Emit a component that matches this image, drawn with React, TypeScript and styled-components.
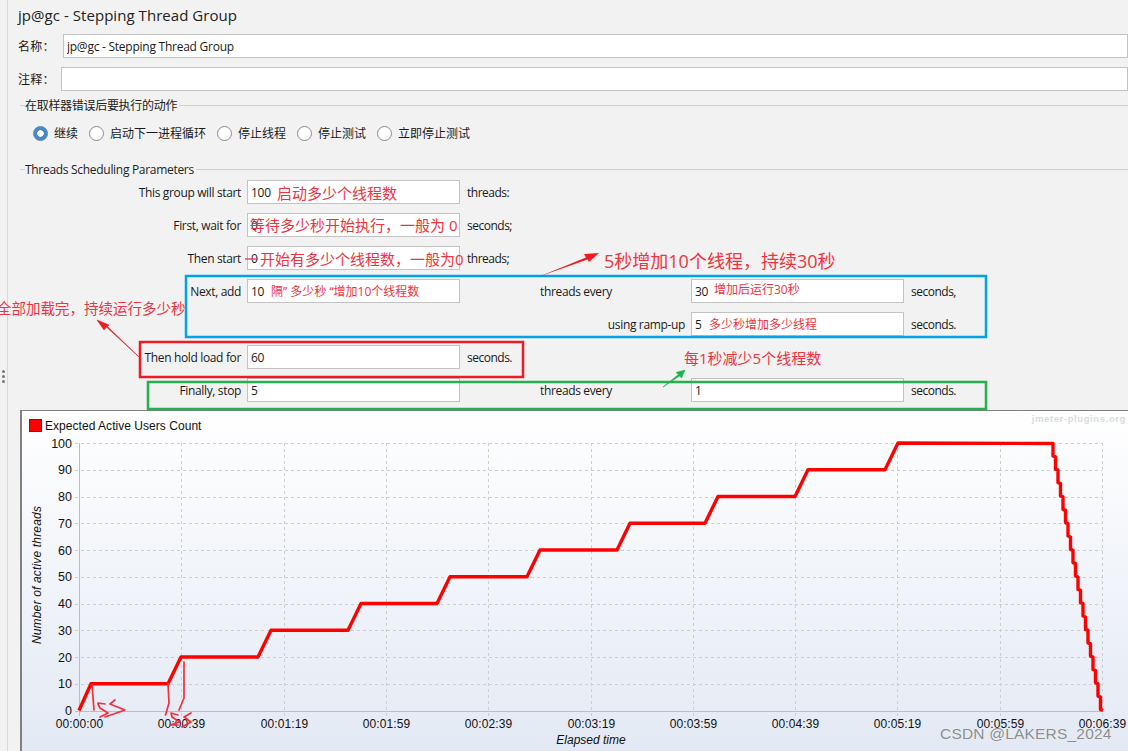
import React from 'react';
import styled, { createGlobalStyle } from 'styled-components';

const UI = `"Open Sans", "Noto Sans CJK SC", sans-serif`;
const CJK = `"Noto Sans CJK SC", "Noto Sans", sans-serif`;
const CHART = `"Liberation Sans", Arial, sans-serif`;

const Global = createGlobalStyle`
  html, body { margin: 0; padding: 0; width: 1128px; height: 751px; overflow: hidden; background: #f2f2f2; }
  #root { width: 1128px; height: 751px; }
  * { box-sizing: border-box; }
`;

const Page = styled.div`
  position: relative; width: 1128px; height: 751px; display: flex; overflow: hidden;
  background: #f2f2f2; color: #1a1a1a; font: 12px/16px ${UI};
`;
const Gutter = styled.div`
  width: 8px; flex: none; border-right: 1px solid #d9d9d9; display: flex; flex-direction: column;
  align-items: flex-start; padding: 370px 0 0 2px; gap: 2px;
`;
const Grip = styled.i`width: 3px; height: 3px; border-radius: 50%; background: #777; display: block;`;
const Main = styled.main`flex: 1; min-width: 0; padding-left: 10px; display: flex; flex-direction: column;`;
const Title = styled.h1`
  margin: 0; height: 34px; padding-top: 4px; font: 400 15px/22px ${UI}; letter-spacing: .05px; color: #222;
`;
const NameRow = styled.div<{ $gap: number }>`
  display: flex; align-items: center; height: 24px; margin-bottom: 9px; gap: ${p => p.$gap}px;
`;
const NameLabel = styled.label`font: 12px/24px ${CJK}; white-space: nowrap; width: 39px; flex: none; letter-spacing: .3px;`;
const Input = styled.input`
  display: block; width: 100%; height: 24px; border: 1.5px solid #c3c3c3; background: #fff; padding: 0 3px;
  font: 12px/20px ${UI}; letter-spacing: -.25px; color: #1a1a1a; outline: none; border-radius: 0;
`;
const Section = styled.section<{ $top: number }>`margin: ${p => p.$top}px 0 0 2px;`;
const Legend = styled.div`
  display: flex; align-items: center; height: 16px; font: 12px/16px ${UI}; letter-spacing: -.3px; color: #222;
  &::before { content: ''; width: 5px; height: 1px; background: #cfcfcf; }
  &::after { content: ''; flex: 1; height: 1px; background: #cfcfcf; margin-left: 2px; }
  & > span { padding-top: 1px; }
`;
const RadioRow = styled.div`display: flex; align-items: center; gap: 11px; height: 24px; margin: 8px 0 0 13px;`;
const RadioItem = styled.label`display: flex; align-items: center; gap: 6px; font: 12px/16px ${CJK};`;
const Radio = styled.span<{ $on?: boolean }>`
  width: 15px; height: 15px; border-radius: 50%; flex: none;
  border: 1px solid ${p => (p.$on ? '#4a86c8' : '#8a8a8a')};
  background: ${p => (p.$on ? 'radial-gradient(circle, #fff 0 3px, #4a86c8 3.5px)' : '#fff')};
`;
const Form = styled.div`
  display: grid; margin: 3px 0 0 -2px; row-gap: 9px; column-gap: 6px;
  grid-template-columns: 223px 213px 68px 145px 213px 1fr; grid-auto-rows: 24px; align-items: center;
  font: 12px/16px ${UI}; letter-spacing: -.35px;
`;
const Lab = styled.span<{ $col?: number; $left?: boolean }>`
  grid-column: ${p => p.$col ?? 1}; text-align: ${p => (p.$left ? 'left' : 'right')}; white-space: nowrap; padding-top: 2px;
`;
const Unit = styled.span<{ $col?: number }>`
  grid-column: ${p => p.$col ?? 3}; padding: 2px 0 0 1px; white-space: nowrap; letter-spacing: -.5px;
`;
const FieldCell = styled.div<{ $col?: number }>`
  grid-column: ${p => p.$col ?? 2};
  & > input { padding-top: 1px; }
`;

const ChartPanel = styled.div`
  margin: 8px 0 0 2px; flex: 1; border-left: 2px solid #808080; border-top: 1px solid #808080;
  background: linear-gradient(#fff 0%, #e3e9f4 100%); overflow: hidden;
`;
const ChartSvg = styled.svg`display: block; width: 100%; height: 100%; font-family: ${CHART};`;
const Overlay = styled.svg`position: absolute; left: 0; top: 0; width: 1128px; height: 751px; pointer-events: none;`;
const Note = styled.span<{ $x: number; $y: number; $s: number }>`
  position: absolute; left: ${p => p.$x}px; top: ${p => p.$y}px; font: ${p => p.$s}px/20px ${UI};
  color: #f03340; white-space: pre; pointer-events: none;
`;
const Watermark = styled.span`
  position: absolute; left: 940px; top: 724px; font: 15.5px/20px ${CHART}; color: rgba(70,70,70,.62);
  letter-spacing: .2px; white-space: nowrap; text-shadow: 0 0 1px rgba(255,255,255,.7);
`;

const X0 = 79, XS = 102.3, Y0 = 710.5, YS = 26.75;
const xLabels = ['00:00:00', '00:00:39', '00:01:19', '00:01:59', '00:02:39', '00:03:19', '00:03:59', '00:04:39', '00:05:19', '00:05:59', '00:06:39'];
const yLabels = Array.from({ length: 11 }, (_, i) => i * 10);

const curve = (() => {
  const pts: string[] = [`79,${Y0}`, `91,${Y0 - YS}`];
  const tops = [91, 181, 271, 361, 450, 540, 630, 718, 808, 898];
  for (let i = 1; i < 10; i++) {
    pts.push(`${tops[i] - 13},${Y0 - YS * i}`, `${tops[i]},${Y0 - YS * (i + 1)}`);
  }
  pts.push(`1053,443.5`);
  for (let i = 0; i < 20; i++) {
    const x = 1053 + i * 2.5;
    const y1 = 443.5 + (i + 1) * 13.35;
    pts.push(`${x.toFixed(1)},${(y1 - 1).toFixed(1)}`, `${(x + 2.5).toFixed(1)},${y1.toFixed(1)}`);
  }
  return pts.join(' ');
})();

const Chart = () => (
  <ChartSvg viewBox="22 411 1106 340" preserveAspectRatio="none">
    <text x="1126" y="422" textAnchor="end" fontSize="9.5" fontWeight="700" fill="#d8dce2" letterSpacing=".6">jmeter-plugins.org</text>
    <rect x="29.5" y="419.5" width="12" height="12" fill="#ff0000" stroke="#b00000" />
    <text x="45" y="430" fontSize="12" fill="#111" letterSpacing=".04">Expected Active Users Count</text>
    {yLabels.map(v => {
      const y = Y0 - (v / 10) * YS;
      return (
        <g key={v}>
          <line x1="75" x2="1102" y1={Math.round(y) + 0.5} y2={Math.round(y) + 0.5} stroke={v === 0 ? '#b9bdc8' : '#cbced4'} strokeDasharray={v === 0 ? undefined : '3 3'} />
          <text x="72" y={y + 4.5} textAnchor="end" fontSize="12.5" fill="#111">{v}</text>
        </g>
      );
    })}
    {xLabels.map((t, i) => {
      const x = Math.round(X0 + i * XS) + 0.5;
      return (
        <g key={t}>
          <line x1={x} x2={x} y1="443" y2="716" stroke={i === 0 ? '#b9bdc8' : '#cbced4'} strokeDasharray={i === 0 ? undefined : '3 3'} />
          <text x={x} y="728" textAnchor="middle" fontSize="12" fill="#111" letterSpacing=".1">{t}</text>
        </g>
      );
    })}
    <text transform="translate(41 575) rotate(-90)" textAnchor="middle" fontSize="12" fontStyle="italic" fill="#111" letterSpacing=".17">Number of active threads</text>
    <text x="591" y="744" textAnchor="middle" fontSize="12" fontStyle="italic" fill="#111">Elapsed time</text>
    <polyline points={curve} fill="none" stroke="#ff0000" strokeWidth="3.4" strokeLinejoin="round" />
  </ChartSvg>
);

const Marks = () => (
  <Overlay viewBox="0 0 1128 751">
    <rect x="186" y="276" width="800" height="61" fill="none" stroke="#00a2e8" strokeWidth="2.5" />
    <rect x="140" y="342" width="383" height="35" fill="none" stroke="#ed1c24" strokeWidth="2.5" />
    <rect x="148" y="382" width="838" height="27" fill="none" stroke="#22b14c" strokeWidth="2.5" />
    <path d="M538 277 L586 257.5 L584 254 L599 253 L589 262 L587.5 259.5 Z" fill="#ed1c24" />
    <path d="M139 357 L106.5 327 L104 330 L97 320 L109 325 L107.5 326.5 Z" fill="#ed1c24" stroke="#ed1c24" strokeWidth=".6" />
    <path d="M663 387 L678.5 374.5 L676 372.5 L685 370 L681.5 378 L679.5 376 Z" fill="#22b14c" stroke="#22b14c" strokeWidth=".6" />
    <line x1="245" y1="259" x2="258" y2="259" stroke="#f03340" strokeWidth="1.3" />
    <g fill="none" stroke="#f0303f" strokeWidth="1.7" strokeLinecap="round" strokeLinejoin="round">
      <path d="M92 685 L94 710" />
      <path d="M98 703 L105 704 M98 704 L100 708 L108 713 L100 717" />
      <path d="M115 700 L110 704 L125 710 L105 717" />
      <path d="M168 683 L169 703 L165.5 715" />
      <path d="M184 662 L184 698 L179 710" />
      <path d="M171 713 L178 715 M171 713 L172 717 L180 722 L170 725 L178 725" />
      <path d="M191 713 L184 717 L191 722 L182 727" />
    </g>
  </Overlay>
);

export default function App() {
  return (
    <Page>
      <Global />
      <Gutter><Grip /><Grip /><Grip /></Gutter>
      <Main>
        <Title>jp@gc - Stepping Thread Group</Title>
        <NameRow $gap={6}><NameLabel>名称：</NameLabel><Input readOnly value="jp@gc - Stepping Thread Group" /></NameRow>
        <NameRow $gap={4}><NameLabel>注释：</NameLabel><Input readOnly value="" /></NameRow>
        <Section $top={-3}>
          <Legend><span>在取样器错误后要执行的动作</span></Legend>
          <RadioRow>
            <RadioItem><Radio $on />继续</RadioItem>
            <RadioItem><Radio />启动下一进程循环</RadioItem>
            <RadioItem><Radio />停止线程</RadioItem>
            <RadioItem><Radio />停止测试</RadioItem>
            <RadioItem><Radio />立即停止测试</RadioItem>
          </RadioRow>
        </Section>
        <Section $top={16}>
          <Legend><span>Threads Scheduling Parameters</span></Legend>
          <Form>
            <Lab>This group will start</Lab><FieldCell><Input readOnly value="100" /></FieldCell><Unit>threads:</Unit>
            <Lab>First, wait for</Lab><FieldCell><Input readOnly value="0" /></FieldCell><Unit>seconds;</Unit>
            <Lab>Then start</Lab><FieldCell><Input readOnly value="0" /></FieldCell><Unit>threads;</Unit>
            <Lab>Next, add</Lab><FieldCell><Input readOnly value="10" /></FieldCell>
            <Lab $col={4} $left>threads every</Lab><FieldCell $col={5}><Input readOnly value="30" /></FieldCell><Unit $col={6}>seconds,</Unit>
            <Lab $col={4}>using ramp-up</Lab><FieldCell $col={5}><Input readOnly value="5" /></FieldCell><Unit $col={6}>seconds.</Unit>
            <Lab>Then hold load for</Lab><FieldCell><Input readOnly value="60" /></FieldCell><Unit>seconds.</Unit>
            <Lab>Finally, stop</Lab><FieldCell><Input readOnly value="5" /></FieldCell>
            <Lab $col={4} $left>threads every</Lab><FieldCell $col={5}><Input readOnly value="1" /></FieldCell><Unit $col={6}>seconds.</Unit>
          </Form>
        </Section>
        <ChartPanel><Chart /></ChartPanel>
      </Main>
      <Marks />
      <Note $x={277} $y={183} $s={15}>启动多少个线程数</Note>
      <Note $x={250} $y={215} $s={15}>等待多少秒开始执行，一般为 0</Note>
      <Note $x={260} $y={249} $s={15}>开始有多少个线程数，一般为0</Note>
      <Note $x={271} $y={282} $s={12}>隔” 多少秒 “增加10个线程数</Note>
      <Note $x={-3} $y={299} $s={14.5}>全部加载完，持续运行多少秒</Note>
      <Note $x={604} $y={251} $s={18}>5秒增加10个线程，持续30秒</Note>
      <Note $x={714} $y={280} $s={12}>增加后运行30秒</Note>
      <Note $x={709} $y={315} $s={12}>多少秒增加多少线程</Note>
      <Note $x={684} $y={348} $s={15}>每1秒减少5个线程数</Note>
      <Watermark>CSDN @LAKERS_2024</Watermark>
    </Page>
  );
}
